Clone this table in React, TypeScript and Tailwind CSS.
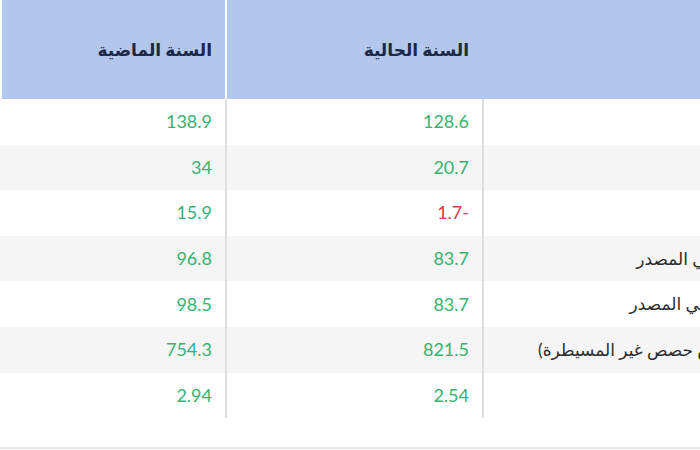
import React from "react";

type Row = {
  label: string;
  current: string;
  previous: string;
};

const rows: Row[] = [
  { label: "الإيرادات", current: "128.6", previous: "138.9" },
  { label: "إجمالي الربح", current: "20.7", previous: "34" },
  { label: "الربح التشغيلي", current: "1.7-", previous: "15.9" },
  { label: "صافي الأرباح العائد لمساهمي المصدر", current: "83.7", previous: "96.8" },
  { label: "صافي الربح الشامل لمساهمي المصدر", current: "83.7", previous: "98.5" },
  { label: "حقوق المساهمين (بعد حقوق حصص غير المسيطرة)", current: "821.5", previous: "754.3" },
  { label: "ربحية السهم", current: "2.54", previous: "2.94" },
];

const font = { fontFamily: "Lato, 'DejaVu Sans', sans-serif" };

const valueColor = (v: string) => (v.endsWith("-") ? "text-[#d23b52]" : "text-[#36b372]");

export default function App() {
  return (
    <div className="w-[700px] h-[450px] overflow-hidden bg-white" dir="ltr" style={font}>
      <div dir="rtl" className="w-[909px]">
        {/* رأس الجدول */}
        <div className="grid grid-cols-[427px_257px_225px] h-[99px] bg-[#b3c6eb]">
          <div />
          <div className="border-l-2 border-white flex items-center pr-[13px] text-[17px] font-bold text-[#1b2847]">
            السنة الحالية
          </div>
          <div className="border-l-2 border-white flex items-center pr-[13px] text-[17px] font-bold text-[#1b2847]">
            السنة الماضية
          </div>
        </div>

        {rows.map((r, i) => (
          <div
            key={i}
            className={`grid grid-cols-[427px_257px_225px] h-[45.6px] ${i % 2 ? "bg-[#f5f5f5]" : "bg-white"}`}
          >
            <div className="border-l-2 border-[#dedede] flex items-center pr-[13px] text-[17px] text-[#2b2b2b] whitespace-nowrap overflow-hidden">
              {r.label}
            </div>
            <div className={`border-l-2 border-[#dedede] flex items-center pr-[13px] text-[18px] ${valueColor(r.current)}`}>
              <span dir="ltr">{r.current}</span>
            </div>
            <div className={`flex items-center pr-[13px] text-[18px] ${valueColor(r.previous)}`}>
              <span dir="ltr">{r.previous}</span>
            </div>
          </div>
        ))}

        <div className="h-[29px]" />
        <div className="h-[2px] bg-[#e6e6e6]" />
        <div className="h-[4px] bg-[#fafafa]" />
      </div>
    </div>
  );
}
